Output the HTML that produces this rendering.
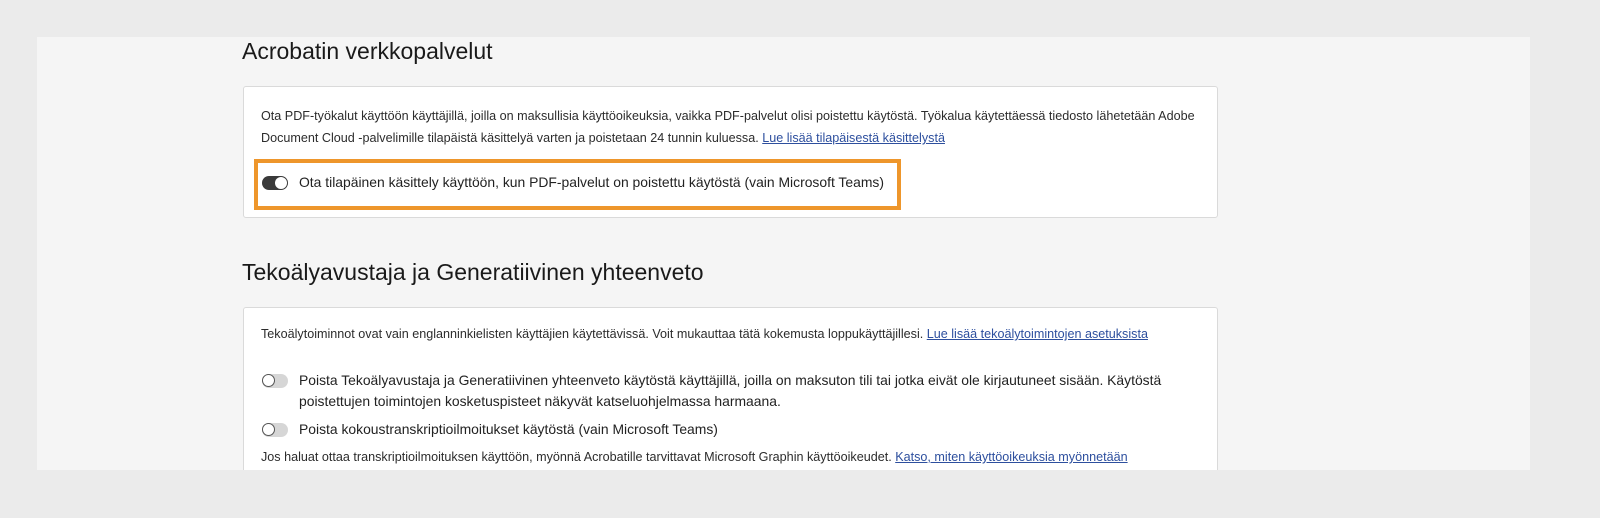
<!DOCTYPE html>
<html><head><meta charset="utf-8"><style>
body{margin:0;width:1600px;height:518px;background:#ebebeb;font-family:"Liberation Sans",sans-serif;color:#222;position:relative;overflow:hidden}
.panel{position:absolute;left:37px;top:37px;width:1493px;height:433px;background:#f5f5f5;overflow:hidden}
.h{position:absolute;left:205px;font-size:23px;color:#1a1a1a;white-space:nowrap}
.card{position:absolute;left:206px;width:973px;background:#fff;border:1px solid #dadada;border-radius:3px}
.t{position:absolute;white-space:nowrap;font-size:12.6px;color:#2c2c2c}
.l{position:absolute;white-space:nowrap;font-size:13.9px;color:#222}
a{color:#2d4f9e;text-decoration:underline}
.tg{position:absolute;width:26px;height:14px;border-radius:8px}
.tg.on{background:#3a3a3a}
.tg.on::after{content:"";position:absolute;right:1px;top:1px;width:12px;height:12px;border-radius:50%;background:#fff}
.tg.off{background:#d6d6d6}
.tg.off::after{content:"";position:absolute;left:0;top:0;width:11px;height:11px;border-radius:50%;background:#fff;border:1.5px solid #555}
.box{position:absolute;left:217px;top:122px;width:639px;height:43px;border:4px solid #ee962b}
</style></head><body>
<div class="panel">
<div class="h" style="top:1px">Acrobatin verkkopalvelut</div>
<div class="card" style="top:49px;height:130px">
<div class="t" style="left:17px;top:22px">Ota PDF-työkalut käyttöön käyttäjillä, joilla on maksullisia käyttöoikeuksia, vaikka PDF-palvelut olisi poistettu käytöstä. Työkalua käytettäessä tiedosto lähetetään Adobe</div>
<div class="t" style="left:17px;top:44px">Document Cloud -palvelimille tilapäistä käsittelyä varten ja poistetaan 24 tunnin kuluessa. <a>Lue lisää tilapäisestä käsittelystä</a></div>
<div class="tg on" style="left:18px;top:89px"></div>
<div class="l" style="left:55px;top:87px">Ota tilapäinen käsittely käyttöön, kun PDF-palvelut on poistettu käytöstä (vain Microsoft Teams)</div>
</div>
<div class="box"></div>
<div class="h" style="top:222px">Tekoälyavustaja ja Generatiivinen yhteenveto</div>
<div class="card" style="top:270px;height:200px">
<div class="t" style="left:17px;top:19px">Tekoälytoiminnot ovat vain englanninkielisten käyttäjien käytettävissä. Voit mukauttaa tätä kokemusta loppukäyttäjillesi. <a>Lue lisää tekoälytoimintojen asetuksista</a></div>
<div class="tg off" style="left:18px;top:66px"></div>
<div class="l" style="left:55px;top:64px">Poista Tekoälyavustaja ja Generatiivinen yhteenveto käytöstä käyttäjillä, joilla on maksuton tili tai jotka eivät ole kirjautuneet sisään. Käytöstä</div>
<div class="l" style="left:55px;top:85px">poistettujen toimintojen kosketuspisteet näkyvät katseluohjelmassa harmaana.</div>
<div class="tg off" style="left:18px;top:115px"></div>
<div class="l" style="left:55px;top:113px">Poista kokoustranskriptioilmoitukset käytöstä (vain Microsoft Teams)</div>
<div class="t" style="left:17px;top:142px">Jos haluat ottaa transkriptioilmoituksen käyttöön, myönnä Acrobatille tarvittavat Microsoft Graphin käyttöoikeudet. <a>Katso, miten käyttöoikeuksia myönnetään</a></div>
</div>
</div>
</body></html>
